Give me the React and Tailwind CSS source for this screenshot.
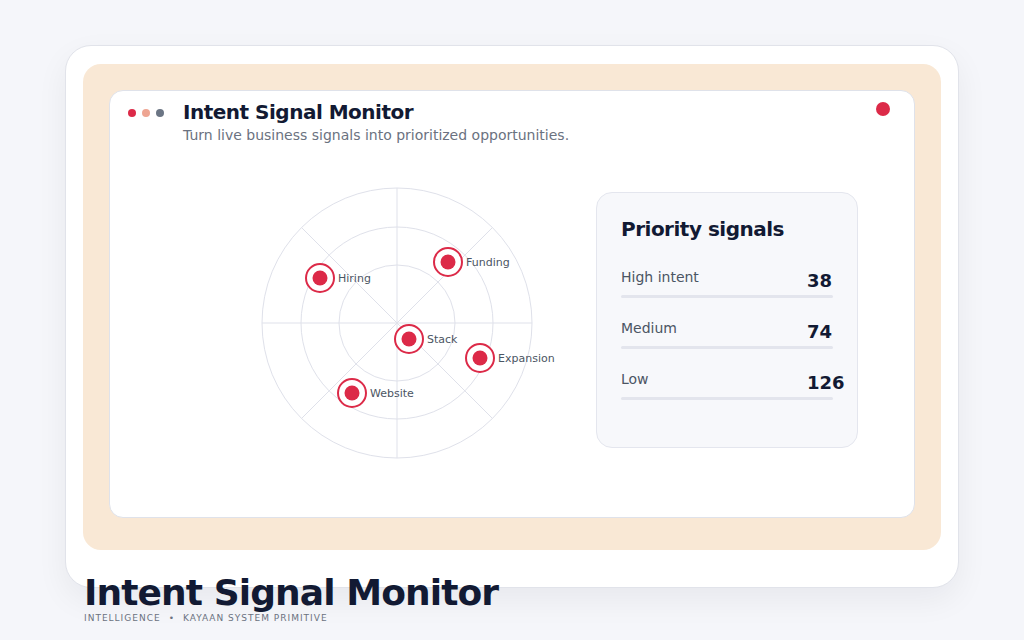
import React from 'react';

const signals = [
  { label: 'Hiring', x: 73, y: 105 },
  { label: 'Funding', x: 201, y: 89 },
  { label: 'Stack', x: 162, y: 166 },
  { label: 'Expansion', x: 233, y: 185 },
  { label: 'Website', x: 105, y: 220 },
];

const priorities = [
  { label: 'High intent', value: 38 },
  { label: 'Medium', value: 74 },
  { label: 'Low', value: 126 },
];

const Radar = () => {
  const c = 150;
  const r = 135;
  const angles = [0, 45, 90, 135];
  return (
    <svg width="300" height="300" viewBox="0 0 300 300" className="overflow-visible shrink-0">
      {[135, 96, 58].map((rad) => (
        <circle key={rad} cx={c} cy={c} r={rad} fill="none" stroke="#dfe1ea" strokeWidth="1" />
      ))}
      {angles.map((a) => {
        const rad = (a * Math.PI) / 180;
        const dx = Math.cos(rad) * r;
        const dy = Math.sin(rad) * r;
        return (
          <line key={a} x1={c - dx} y1={c - dy} x2={c + dx} y2={c + dy} stroke="#dfe1ea" strokeWidth="1" />
        );
      })}
      {signals.map((s) => (
        <g key={s.label}>
          <circle cx={s.x} cy={s.y} r="14" fill="#fff" stroke="#dc2a48" strokeWidth="2" />
          <circle cx={s.x} cy={s.y} r="7.5" fill="#dc2a48" />
          <text x={s.x + 18} y={s.y + 4} fontSize="11" fill="#4b5563" fontFamily="DejaVu Sans, sans-serif">
            {s.label}
          </text>
        </g>
      ))}
    </svg>
  );
};

const App = () => {
  return (
    <div className="min-h-[640px] bg-[#f5f6fa] pt-[45px] px-[65px] font-['DejaVu_Sans',sans-serif] text-[#121a33]">
      {/* Outer frame */}
      <div className="rounded-[26px] border border-[#e1e3ea] bg-white px-[17px] pt-[18px] pb-[37px] shadow-[0_12px_32px_rgba(15,23,42,0.06)]">
        <div className="rounded-[18px] bg-[#f9e8d5] px-[26px] pt-[26px] pb-[32px]">
          <div className="h-[428px] rounded-[14px] border border-[#dfe2ea] bg-white pl-[18px] pr-[24px] pt-[9px]">
            {/* Header */}
            <div className="flex items-start">
              <div className="mt-[9px] flex gap-[6px]">
                <span className="h-2 w-2 rounded-full bg-[#dc2a48]" />
                <span className="h-2 w-2 rounded-full bg-[#eea592]" />
                <span className="h-2 w-2 rounded-full bg-[#6b7584]" />
              </div>
              <div className="ml-[19px] flex-1">
                <h1 className="text-[20px] font-bold leading-6 tracking-tight">Intent Signal Monitor</h1>
                <p className="mt-[1px] text-[14px] leading-5 text-[#6b7280]">
                  Turn live business signals into prioritized opportunities.
                </p>
              </div>
              <span className="mt-[2px] h-[14px] w-[14px] rounded-full bg-[#dc2a48]" />
            </div>

            {/* Body */}
            <div className="mt-[28px] flex items-start">
              <div className="ml-[119px]">
                <Radar />
              </div>
              <div className="ml-[49px] mt-[19px] h-[256px] w-[262px] rounded-[16px] border border-[#e4e6ee] bg-[#f7f8fb] pl-[24px] pt-[22px]">
                <h2 className="text-xl font-bold leading-7 tracking-tight">Priority signals</h2>
                <div className="mt-[24px] flex w-[212px] flex-col gap-[20px]">
                  {priorities.map((p) => (
                    <div key={p.label}>
                      <div className="grid grid-cols-[1fr_26px] items-end">
                        <span className="mb-[8px] text-[14px] leading-5 text-[#4b5563]">{p.label}</span>
                        <span className="mb-[2px] whitespace-nowrap text-lg font-bold leading-6">{p.value}</span>
                      </div>
                      <div className="h-[3px] rounded-full bg-[#e3e5ed]" />
                    </div>
                  ))}
                </div>
              </div>
            </div>
          </div>
        </div>
      </div>

      {/* Footer caption */}
      <div className="-mt-[13px] pl-[19px]">
        <div className="text-[36px] font-bold leading-none tracking-tight">Intent Signal Monitor</div>
        <div className="mt-[1px] text-[9px] leading-3 tracking-[1px] text-[#6b7280]">
          INTELLIGENCE<span className="mx-2">•</span>KAYAAN SYSTEM PRIMITIVE
        </div>
      </div>
    </div>
  );
};

export default App;
